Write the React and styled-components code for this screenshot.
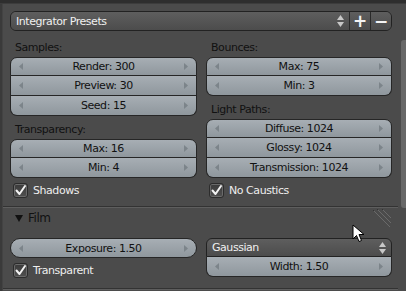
import React from 'react'
import styled, { createGlobalStyle } from 'styled-components'

const Global = createGlobalStyle`
    html, body {
        margin: 0;
        padding: 0;
        background: #4b4b4b;
    }
    body {
        font-family: 'DejaVu Sans', sans-serif;
        font-size: 11px;
        letter-spacing: -0.45px;
    }
`

function Arrow({ dir }) {
    return (
        <svg width="5" height="7" viewBox="0 0 5 7">
            {dir === 'left'
                ? <path d="M4 0 L0 3.5 L4 7 Z" fill="#7c848a" />
                : <path d="M1 0 L5 3.5 L1 7 Z" fill="#7c848a" />}
        </svg>
    )
}

function UpDown() {
    return (
        <svg width="7" height="12" viewBox="0 0 7 12">
            <path d="M3.5 0 L7 5 L0 5 Z" fill="#c8c8c8" />
            <path d="M3.5 12 L7 7 L0 7 Z" fill="#c8c8c8" />
        </svg>
    )
}

function Check() {
    return (
        <svg width="13" height="13" viewBox="0 0 13 13">
            <path d="M2.5 6.5 L5.5 10 L11 2" fill="none" stroke="#f2f2f2" strokeWidth="2" strokeLinecap="round" strokeLinejoin="round" />
        </svg>
    )
}

function NumField({ items }) {
    return (
        <Stack>
            {items.map((t, i) => (
                <NumRow key={t} first={i === 0} last={i === items.length - 1}>
                    <Arrow dir="left" />
                    <span>{t}</span>
                    <Arrow dir="right" />
                </NumRow>
            ))}
        </Stack>
    )
}

function CheckBox({ label }) {
    return (
        <CheckRow>
            <Box><Check /></Box>
            <CheckLabel>{label}</CheckLabel>
        </CheckRow>
    )
}

export default function App() {
    return (
        <Screen>
            <Global />
            <TopStrip />
            <Body>
                <LeftEdge />
                <Main>
                    <Section>
                        <PresetRow>
                            <Menu wide>
                                <span>Integrator Presets</span>
                                <UpDown />
                            </Menu>
                            <IconBtn>+</IconBtn>
                            <IconBtn last>−</IconBtn>
                        </PresetRow>
                        <Columns>
                            <Col>
                                <Label first>Samples:</Label>
                                <NumField items={['Render: 300', 'Preview: 30', 'Seed: 15']} />
                                <Label>Transparency:</Label>
                                <NumField items={['Max: 16', 'Min: 4']} />
                                <CheckBox label="Shadows" />
                            </Col>
                            <Col>
                                <Label first>Bounces:</Label>
                                <NumField items={['Max: 75', 'Min: 3']} />
                                <Label>Light Paths:</Label>
                                <NumField items={['Diffuse: 1024', 'Glossy: 1024', 'Transmission: 1024']} />
                                <CheckBox label="No Caustics" />
                            </Col>
                        </Columns>
                    </Section>
                    <PanelHeader>
                        <Triangle />
                        <HeaderText>Film</HeaderText>
                        <Grip viewBox="0 0 18 18" width="18" height="18">
                            <path d="M4 0 L18 14 M0 1 L17 18 M9 0 L18 9" stroke="#333" strokeWidth="1" />
                            <path d="M5 0 L18 13 M1 1 L17 17 M10 0 L18 8" stroke="#6a6a6a" strokeWidth="1" transform="translate(0,1)" />
                        </Grip>
                    </PanelHeader>
                    <FilmBody>
                        <Columns>
                            <Col>
                                <NumField items={['Exposure: 1.50']} />
                                <CheckBox label="Transparent" />
                            </Col>
                            <Col>
                                <Stack>
                                    <Menu top>
                                        <span>Gaussian</span>
                                        <UpDown />
                                    </Menu>
                                    <NumRow last>
                                        <Arrow dir="left" />
                                        <span>Width: 1.50</span>
                                        <Arrow dir="right" />
                                    </NumRow>
                                </Stack>
                            </Col>
                        </Columns>
                    </FilmBody>
                    <BottomLine />
                </Main>
                <ScrollTrack>
                    <Thumb />
                </ScrollTrack>
            </Body>
            <Cursor viewBox="0 0 13 19" width="13" height="19">
                <path d="M1 1 L1 15 L4.5 11.5 L7 17.5 L9.5 16.5 L7 10.5 L12 10.5 Z" fill="#fff" stroke="#000" strokeWidth="1" strokeLinejoin="round" />
            </Cursor>
        </Screen>
    )
}

const Screen = styled.div`
    position: relative;
    width: 406px;
    height: 291px;
    overflow: hidden;
    background: #4b4b4b;
    display: flex;
    flex-direction: column;
`

const TopStrip = styled.div`
    flex-shrink: 0;
    height: 3px;
    background: #2e2e2e;
    border-bottom: 1px solid #3c3c3c;
`

const Body = styled.div`
    flex: 1;
    min-height: 0;
    display: flex;
`

const LeftEdge = styled.div`
    width: 2px;
    background: #3a3a3a;
    border-right: 1px solid #434343;
`

const Main = styled.div`
    flex: 1;
    display: flex;
    flex-direction: column;
`

const Section = styled.div`
    flex-shrink: 0;
    padding: 7px 6px 0 7px;
    height: 202px;
    box-sizing: border-box;
`

const PresetRow = styled.div`
    display: flex;
    height: 20px;
    border: 1px solid #222;
    border-radius: 6px;
    overflow: hidden;
    box-sizing: border-box;
`

const Menu = styled.div`
    flex: ${p => (p.wide ? 1 : 'none')};
    height: ${p => (p.top ? '19px' : '100%')};
    display: flex;
    align-items: center;
    justify-content: space-between;
    padding: 0 5px 0 5px;
    box-sizing: border-box;
    color: #f0f0f0;
    background: linear-gradient(#5e5e5e, #4c4c4c);
    border-radius: ${p => (p.top ? '6px 6px 0 0' : '0')};
    border: ${p => (p.top ? '1px solid #222' : 'none')};
`

const IconBtn = styled.div`
    width: 20px;
    display: flex;
    align-items: center;
    justify-content: center;
    color: #f4f4f4;
    font-size: 17px;
    font-weight: bold;
    background: linear-gradient(#5e5e5e, #4c4c4c);
    border-left: 1px solid #2a2a2a;
`

const Columns = styled.div`
    display: grid;
    grid-template-columns: 187px 186px;
    column-gap: 9px;
`

const Col = styled.div`
    display: flex;
    flex-direction: column;
`

const Label = styled.div`
    height: 18px;
    line-height: 18px;
    margin-top: ${p => (p.first ? '8px' : '5px')};
    padding-left: 5px;
    color: #111;
`

const Stack = styled.div`
    display: flex;
    flex-direction: column;
`

const NumRow = styled.div`
    height: ${p => (p.first && !p.last ? '19px' : '20px')};
    flex-shrink: 0;
    display: flex;
    align-items: center;
    justify-content: space-between;
    padding: 0 8px 0 8px;
    box-sizing: border-box;
    color: #111;
    background: linear-gradient(#a7aeb4, #8f979d);
    border: 1px solid #262626;
    border-top: ${p => (p.first ? '1px solid #262626' : 'none')};
    border-radius: ${p => (p.first && p.last ? '10px' : p.first ? '7px 7px 0 0' : p.last ? '0 0 7px 7px' : '0')};
    span {
        flex: 1;
        text-align: center;
    }
`

const CheckRow = styled.div`
    display: flex;
    align-items: center;
    height: 16px;
    margin-top: 4px;
    padding-left: 3px;
`

const Box = styled.div`
    width: 13px;
    height: 13px;
    border-radius: 3px;
    border: 1px solid #2c2c2c;
    background: linear-gradient(#3a3a3a, #505050);
    box-shadow: inset 0 0 0 1px #6a6a6a;
    display: flex;
    align-items: center;
    justify-content: center;
    box-sizing: content-box;
`

const CheckLabel = styled.span`
    margin-left: 5px;
    color: #eeeeee;
`

const PanelHeader = styled.div`
    flex-shrink: 0;
    position: relative;
    height: 23px;
    box-sizing: border-box;
    display: flex;
    align-items: center;
    padding-left: 12px;
    border-top: 1px solid #333;
    box-shadow: inset 0 1px 0 #5e5e5e;
`

const Triangle = styled.div`
    width: 0;
    height: 0;
    border-left: 4px solid transparent;
    border-right: 4px solid transparent;
    border-top: 7px solid #111;
`

const HeaderText = styled.span`
    margin-left: 5px;
    color: #111;
    font-size: 12px;
`

const Grip = styled.svg`
    position: absolute;
    right: 7px;
    top: 2px;
`

const FilmBody = styled.div`
    flex-shrink: 0;
    padding: 9px 6px 0 7px;
    height: 59px;
    box-sizing: border-box;
`

const BottomLine = styled.div`
    border-top: 1px solid #333;
    box-shadow: inset 0 1px 0 #5e5e5e;
    height: 3px;
`

const ScrollTrack = styled.div`
    width: 8px;
    padding-top: 36px;
    box-sizing: border-box;
`

const Thumb = styled.div`
    margin-left: 3px;
    width: 6px;
    height: 168px;
    border-radius: 3px 0 0 3px;
    background: #686868;
`

const Cursor = styled.svg`
    position: absolute;
    left: 352px;
    top: 224px;
`
